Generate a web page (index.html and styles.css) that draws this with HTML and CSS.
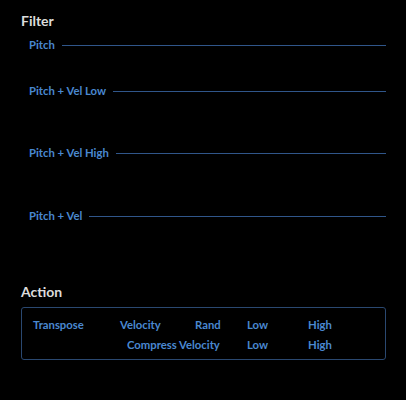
FILE: index.html
```html
<!DOCTYPE html>
<html lang="en">
<head>
    <meta charset="UTF-8">
    <meta name="viewport" content="width=device-width, initial-scale=1.0">
    <title>Filter / Action</title>
    <link rel="stylesheet" href="styles.css">
</head>
<body>
    <div class="panel">
        <h2 class="heading">Filter</h2>

        <div class="filter-row">
            <span class="label">Pitch</span>
            <span class="rule"></span>
        </div>
        <div class="filter-row row-low">
            <span class="label">Pitch + Vel Low</span>
            <span class="rule"></span>
        </div>
        <div class="filter-row row-high">
            <span class="label">Pitch + Vel High</span>
            <span class="rule"></span>
        </div>
        <div class="filter-row row-vel">
            <span class="label">Pitch + Vel</span>
            <span class="rule"></span>
        </div>

        <h2 class="heading action-heading">Action</h2>

        <div class="action-box">
            <span class="cell">Transpose</span>
            <span class="cell">Velocity</span>
            <span class="cell">Rand</span>
            <span class="cell">Low</span>
            <span class="cell">High</span>

            <span class="cell compress">Compress Velocity</span>
            <span class="cell">Low</span>
            <span class="cell">High</span>
        </div>
    </div>
</body>
</html>
```

FILE: styles.css
```css
html, body {
    margin: 0;
    background: #000;
}

body {
    font-family: Lato, 'Noto Sans', sans-serif;
    color: #4a88d0;
}

.panel {
    padding: 12px 20px 20px 21px;
}

.heading {
    margin: 0;
    height: 18px;
    line-height: 18px;
    font-size: 14px;
    font-weight: bold;
    color: #dcdcdc;
}

.filter-row {
    display: flex;
    align-items: flex-start;
    height: 14px;
    margin-top: 8px;
    padding-left: 8px;
}

.row-low {
    margin-top: 32px;
}

.row-high {
    margin-top: 48px;
}

.row-vel {
    margin-top: 49px;
}

.label {
    font-size: 11.3px;
    font-weight: bold;
    line-height: 14px;
    white-space: nowrap;
}

.rule {
    flex: 1;
    height: 1px;
    margin: 7px 0 0 7px;
    background: #30568a;
}

.action-heading {
    margin-top: 60px;
}

.action-box {
    display: grid;
    grid-template-columns: 87px 75px 52px 61px 1fr;
    row-gap: 6px;
    margin-top: 6px;
    padding: 10px 11px 7px;
    border: 1px solid #2a4870;
    border-radius: 3px;
}

.cell {
    font-size: 11.3px;
    font-weight: bold;
    line-height: 14px;
    white-space: nowrap;
}

.compress {
    grid-column: 2 / 4;
    padding-left: 7px;
}
```
